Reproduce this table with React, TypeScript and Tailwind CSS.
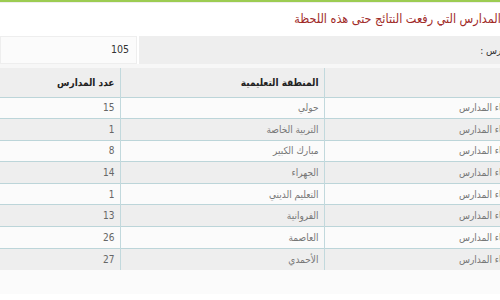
const rows = [
  { area: "حولي", count: 15 },
  { area: "التربية الخاصة", count: 1 },
  { area: "مبارك الكبير", count: 8 },
  { area: "الجهراء", count: 14 },
  { area: "التعليم الديني", count: 1 },
  { area: "الفروانية", count: 13 },
  { area: "العاصمة", count: 26 },
  { area: "الأحمدي", count: 27 },
];

export default function App() {
  return (
    <div className="w-[500px] h-[300px] overflow-hidden bg-white font-['DejaVu_Sans_Condensed','DejaVu_Sans',sans-serif]">
      <div dir="rtl" className="w-[540px] border-t-2 border-[#9ccc52]">
        <div className="h-[1px] bg-[#eeeeee]" />
        <h2 className="pr-[18px] pt-[7px] h-[33px] text-[12.5px] leading-[18px] text-[#a02a28]">
          عدد المدارس التي رفعت النتائج حتى هذه اللحظة
        </h2>
        <div className="flex h-[28px] gap-[2px]">
          <div className="flex-1 bg-[#eeeeee] flex items-center pr-[4px] text-[10px] text-[#333]">
            عدد المدارس :
          </div>
          <div className="w-[137px] bg-[#fbfbfb] border border-[#eeeeee] flex items-center pr-[7px] text-[10.5px] text-[#333]">
            105
          </div>
        </div>
        <div className="h-[4px] bg-[#f7f7f7]" />
        <table className="w-full border-collapse text-[10px]">
          <thead>
            <tr className="h-[29px] bg-[#eeeeee] text-[#222]">
              <th className="text-right font-bold pr-[6px]"></th>
              <th className="w-[204px] text-right font-bold pr-[5px] border-x border-[#c2d9dd]">المنطقة التعليمية</th>
              <th className="w-[120px] text-right font-bold pr-[5px]">عدد المدارس</th>
            </tr>
          </thead>
          <tbody>
            {rows.map((r, i) => (
              <tr
                key={i}
                className={`h-[21.6px] border-t border-[#bcd5d9] ${i % 2 === 0 ? "bg-[#fbfbfb]" : "bg-[#eeeeee]"}`}
              >
                <td className="text-right pr-[23px] text-[#777]">أسماء المدارس</td>
                <td className="text-right pr-[5px] text-[#777] border-x border-[#c2d9dd]">{r.area}</td>
                <td className="text-right pr-[5px] text-[#666]">{r.count}</td>
              </tr>
            ))}
          </tbody>
        </table>
        <div className="h-[24px] bg-[#fbfbfb]" />
      </div>
    </div>
  );
}
